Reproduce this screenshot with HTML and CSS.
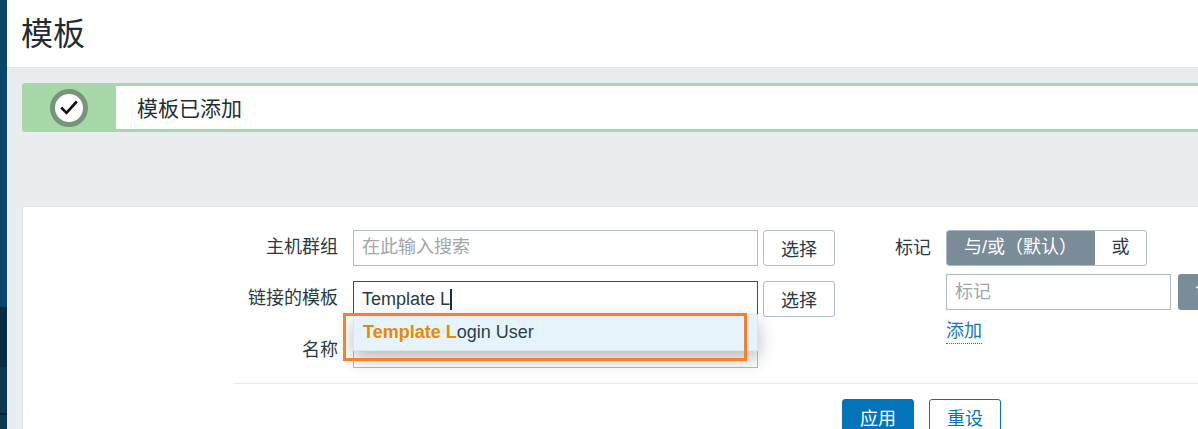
FILE: index.html
```html
<!DOCTYPE html>
<html lang="zh">
<head>
<meta charset="utf-8">
<title>模板</title>
<link rel="stylesheet" href="styles.css">
</head>
<body>
<div class="app">
  <aside class="sidebar">
    <div class="side-a"></div>
    <div class="side-b"></div>
    <div class="side-c"></div>
    <div class="side-d"></div>
    <div class="side-e"></div>
  </aside>
  <main class="main">
    <header class="page-head"><h1 class="page-title">模板</h1></header>
    <div class="content">
      <div class="msg">
        <div class="msg-icon">
          <span class="msg-circle">
            <svg class="msg-check" viewBox="0 0 18 15" width="18" height="15"><path d="M1.2 7.5 L6.5 12.8 L16.8 1.5" fill="none" stroke="#111" stroke-width="2.6"/></svg>
          </span>
        </div>
        <div class="msg-text">模板已添加</div>
      </div>
      <section class="card">
        <div class="filter">
          <div class="col-left">
            <div class="row">
              <label class="lbl">主机群组</label>
              <div class="field ph">在此输入搜索</div>
              <button class="btn-sel">选择</button>
            </div>
            <div class="row">
              <label class="lbl">链接的模板</label>
              <div class="field focus">Template L<span class="caret"></span></div>
              <button class="btn-sel">选择</button>
            </div>
            <div class="row">
              <label class="lbl lbl-name">名称</label>
              <div class="field"></div>
            </div>
            <div class="suggest"><b class="hit">Template L</b>ogin User</div>
            <div class="mark"></div>
          </div>
          <div class="col-right">
            <label class="lbl lbl-tag">标记</label>
            <div class="tag-body">
              <div class="seg"><span class="seg-on">与/或（默认）</span><span class="seg-off">或</span></div>
              <div class="tag-row">
                <div class="field tag-input ph">标记</div>
                <div class="tag-btn">包含</div>
              </div>
              <a class="add-link">添加</a>
            </div>
          </div>
        </div>
        <div class="actions">
          <button class="btn-apply">应用</button>
          <button class="btn-reset">重设</button>
        </div>
      </section>
    </div>
  </main>
</div>
</body>
</html>
```
FILE: styles.css
```css
* { box-sizing: border-box; }
html, body { margin: 0; height: 429px; overflow: hidden; }
body { font-family: "Liberation Sans", "Noto Sans CJK SC", sans-serif; font-size: 18px; color: #1f2c33; background: #e9edf0; }
.app { display: flex; width: 1198px; height: 429px; overflow: hidden; }
.sidebar { width: 7px; flex: none; display: flex; flex-direction: column; background: #0a466a; }
.side-a { height: 307px; background: #0a466a; }
.side-b { height: 60px; background: #0a2c42; }
.side-c { height: 46px; background: #0d3650; }
.side-d { height: 2px; background: #06202f; }
.side-e { flex: 1; background: #0d3650; }
.main { flex: 1; min-width: 0; }
.page-head { height: 68px; background: #fff; border-bottom: 1px solid #dfe4e7; padding-left: 14px; }
.page-title { margin: 0; font-weight: 400; font-size: 32px; line-height: 68px; color: #1f2c33; }
.content { padding: 15px 0 0 15px; }
.msg { display: flex; width: 1200px; height: 49px; background: #a8d7a8; border-radius: 3px 0 0 3px; padding: 3px 0; }
.msg-icon { width: 94px; flex: none; display: flex; align-items: center; justify-content: center; }
.msg-circle { width: 38px; height: 38px; border-radius: 50%; border: 5px solid #76957a; background: #fff; display: flex; align-items: center; justify-content: center; }
.msg-text { flex: 1; background: #fff; font-size: 21px; line-height: 45px; padding-left: 21px; color: #1f2c33; }
.card { width: 1200px; height: 240px; margin-top: 74px; background: #fff; border: 1px solid #e1e5e8; border-right: 0; border-bottom: 0; }
.filter { display: flex; height: 177px; margin-left: 210px; padding-top: 23px; border-bottom: 1px solid #e8ebed; }
.col-left { position: relative; width: 606px; flex: none; display: flex; flex-direction: column; gap: 15px; }
.row { display: flex; height: 36px; align-items: center; }
.lbl { width: 105px; flex: none; text-align: right; color: #2a3a42; line-height: 35px; align-self: flex-start; }
.lbl-name { line-height: 36px; }
.field { height: 36px; width: 405px; flex: none; margin-left: 15px; background: #fff; border: 1px solid #acbbc6; padding-left: 8px; line-height: 32px; font-size: 18px; }
.ph { color: #a2a6a9; }
.focus { border-color: #0d5c8c; display: flex; align-items: center; color: #2a3a42; }
.caret { width: 2px; height: 21px; background: #1f2c33; }
.btn-sel { width: 72px; height: 36px; margin-left: 5px; background: #fff; border: 1px solid #acbbc6; border-radius: 3px; font: inherit; color: #2a3a42; padding: 0; }
.suggest { position: absolute; left: 120px; top: 84px; width: 405px; height: 37px; background: #e6f3fb; border: 1px solid #dce6ec; padding-left: 9px; line-height: 35px; color: #2a3f4e; box-shadow: 0 8px 18px rgba(30, 50, 60, 0.32); }
.hit { color: #e78a05; font-weight: 700; }
.mark { position: absolute; left: 110px; top: 83px; width: 404px; height: 48px; border: 3px solid #fb7f2b; }
.col-right { display: flex; flex: 1; align-items: flex-start; }
.lbl-tag { width: 92px; height: 36px; line-height: 36px; }
.tag-body { margin-left: 15px; display: flex; flex-direction: column; }
.seg { display: flex; width: 201px; height: 36px; border: 1px solid #acbbc6; border-radius: 3px; overflow: hidden; line-height: 32px; }
.seg-on { width: 149px; background: #798c98; margin: -1px 0 -1px -1px; color: #fff; text-align: center; line-height: 34px; white-space: nowrap; }
.seg-off { flex: 1; text-align: center; color: #2a3a42; }
.tag-row { display: flex; margin-top: 8px; }
.tag-input { width: 225px; margin-left: 0; line-height: 35px; }
.tag-btn { width: 60px; height: 36px; margin-left: 7px; padding-left: 17px; flex: none; background: #798c98; border-radius: 3px; color: #fff; line-height: 34px; white-space: nowrap; overflow: hidden; }
.add-link { align-self: flex-start; margin-top: 9px; color: #0f78b8; border-bottom: 1px dotted #0f78b8; line-height: 24px; }
.actions { display: flex; margin-left: 819px; margin-top: 15px; gap: 15px; }
.btn-apply, .btn-reset { width: 72px; height: 36px; border-radius: 3px; font: inherit; padding: 0; }
.btn-apply { background: #0275b8; border: 1px solid #0275b8; color: #fff; }
.btn-reset { background: #fff; border: 1px solid #0275b8; color: #0275b8; }
```
